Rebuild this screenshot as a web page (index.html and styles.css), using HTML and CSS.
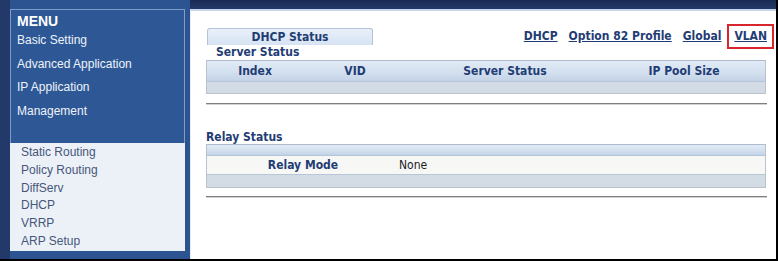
FILE: index.html
```html
<!DOCTYPE html>
<html>
<head>
<meta charset="utf-8">
<link rel="stylesheet" href="styles.css">
</head>
<body>
<div class="frame">
  <aside class="sidebar">
    <div class="panel">
      <div class="menu">
        <div class="menu-title">MENU</div>
        <div class="menu-item">Basic Setting</div>
        <div class="menu-item">Advanced Application</div>
        <div class="menu-item">IP Application</div>
        <div class="menu-item">Management</div>
      </div>
      <div class="submenu">
        <div class="sub-item">Static Routing</div>
        <div class="sub-item">Policy Routing</div>
        <div class="sub-item">DiffServ</div>
        <div class="sub-item">DHCP</div>
        <div class="sub-item">VRRP</div>
        <div class="sub-item">ARP Setup</div>
      </div>
    </div>
  </aside>
  <main class="content">
    <div class="tabrow">
      <div class="tab">DHCP Status</div>
      <nav class="links">
        <a class="link">DHCP</a>
        <a class="link">Option 82 Profile</a>
        <a class="link">Global</a>
        <a class="link link-active">VLAN</a>
      </nav>
    </div>
    <div class="section-title indent">Server Status</div>
    <div class="tbl">
      <div class="thead server-cols">
        <div class="th">Index</div>
        <div class="th">VID</div>
        <div class="th">Server Status</div>
        <div class="th">IP Pool Size</div>
      </div>
      <div class="tfoot"></div>
    </div>
    <div class="rule"></div>
    <div class="section-title relay-title">Relay Status</div>
    <div class="tbl">
      <div class="thead thin"></div>
      <div class="trow">
        <div class="row-label">Relay Mode</div>
        <div class="row-value">None</div>
      </div>
      <div class="tfoot tall"></div>
    </div>
    <div class="rule rule-bottom"></div>
  </main>
</div>
</body>
</html>
```

FILE: styles.css
```css
html, body {
  margin: 0;
  padding: 0;
  background: #ffffff;
}

.frame {
  width: 776px;
  height: 259px;
  border-right: 2px solid #000;
  border-bottom: 2px solid #000;
  background: linear-gradient(180deg, #1a2b53 0px, #23396a 9px, #24406f 100%);
  display: flex;
  overflow: hidden;
}

/* ---------- sidebar ---------- */
.sidebar {
  width: 175px;
  padding: 9px 5px 8px 10px;
  display: flex;
  flex-direction: column;
  background: linear-gradient(90deg, #22396a 0px, #22396a 10px, #2c5490 10px);
}

.panel {
  flex: 1;
  display: flex;
  flex-direction: column;
  border-top: 1px solid #7f9dca;
  border-left: 1px solid #7f9dca;
  border-right: 1px solid #7f9dca;
  background: #2e5895;
}

.menu {
  box-sizing: border-box;
  height: 133px;
  padding: 3px 0 0 6px;
  font-family: "Liberation Sans", Arial, sans-serif;
  color: #eef3fb;
}

.menu-title {
  font-size: 14px;
  font-weight: bold;
  line-height: 16px;
  color: #ffffff;
}

.menu-item {
  font-size: 12px;
  line-height: 23.7px;
}

.submenu {
  flex: 1;
  background: #ecf1f8;
  padding: 1px 0 0 11px;
  margin-left: -1px;
  margin-right: -1px;
  font-family: "Liberation Sans", Arial, sans-serif;
  font-size: 12px;
  line-height: 17.8px;
  color: #46567a;
}

/* ---------- content ---------- */
.content {
  flex: 1;
  margin-top: 9px;
  border-top: 2px solid #c4d5ea;
  border-left: 1px solid #e3ebf5;
  background: #ffffff;
  padding: 0 10px 0 15px;
  font-family: "DejaVu Sans Condensed", "DejaVu Sans", Tahoma, sans-serif;
  color: #1f3d74;
}

.tabrow {
  display: flex;
  align-items: center;
  justify-content: space-between;
  margin-top: 17px;
  margin-right: -8px;
  height: 17px;
}

.tab {
  margin-left: 1px;
  width: 164px;
  height: 16px;
  border: 1px solid #b3c3d8;
  border-bottom: none;
  border-radius: 3px 3px 0 0;
  background: linear-gradient(180deg, #e9f0f9 0%, #d6e3f3 100%);
  text-align: center;
  font-weight: bold;
  font-size: 12px;
  line-height: 16px;
}

.links {
  display: flex;
  align-items: center;
}

.link {
  font-weight: bold;
  font-size: 12px;
  line-height: 15px;
  text-decoration: underline;
  color: #1f3d74;
  margin-left: 11px;
}

.link-active {
  margin-left: 6px;
  border: 2px solid #d9262e;
  padding: 3px 5px 3px 5px;
}

.section-title {
  font-weight: bold;
  font-size: 12px;
  line-height: 15px;
}

.indent {
  padding-left: 10px;
}

.relay-title {
  margin-top: 26px;
  line-height: 13px;
}

.tbl {
  border-left: 1px solid #b9c3cf;
  border-right: 1px solid #b9c3cf;
}

.thead {
  height: 20px;
  border-top: 1px solid #aebccd;
  background: linear-gradient(180deg, #e2ebf6 0%, #d3e0ef 55%, #c3d3e7 100%);
  border-bottom: 1px solid #b5c4d6;
}

.thead.thin {
  height: 10px;
}

.server-cols {
  display: grid;
  grid-template-columns: 96px 104px 196px 1fr;
}

.th {
  text-align: center;
  font-weight: bold;
  font-size: 12px;
  line-height: 20px;
}

.tfoot {
  height: 11px;
  background: #d3dbe5;
  border-bottom: 1px solid #b9c3cf;
}

.tfoot.tall {
  height: 12px;
  border-top: 1px solid #b8c6d6;
}

.trow {
  display: flex;
  height: 18px;
  background: #f7f7f6;
  align-items: center;
}

.row-label {
  width: 192px;
  text-align: center;
  font-weight: bold;
  font-size: 12px;
}

.row-value {
  font-size: 12px;
  color: #222;
}

.rule {
  margin-top: 9px;
  margin-right: -1px;
  border-top: 1px solid #7f7f7f;
  border-bottom: 1px solid #d2d2d2;
}

.rule-bottom {
  margin-top: 8px;
}
```
